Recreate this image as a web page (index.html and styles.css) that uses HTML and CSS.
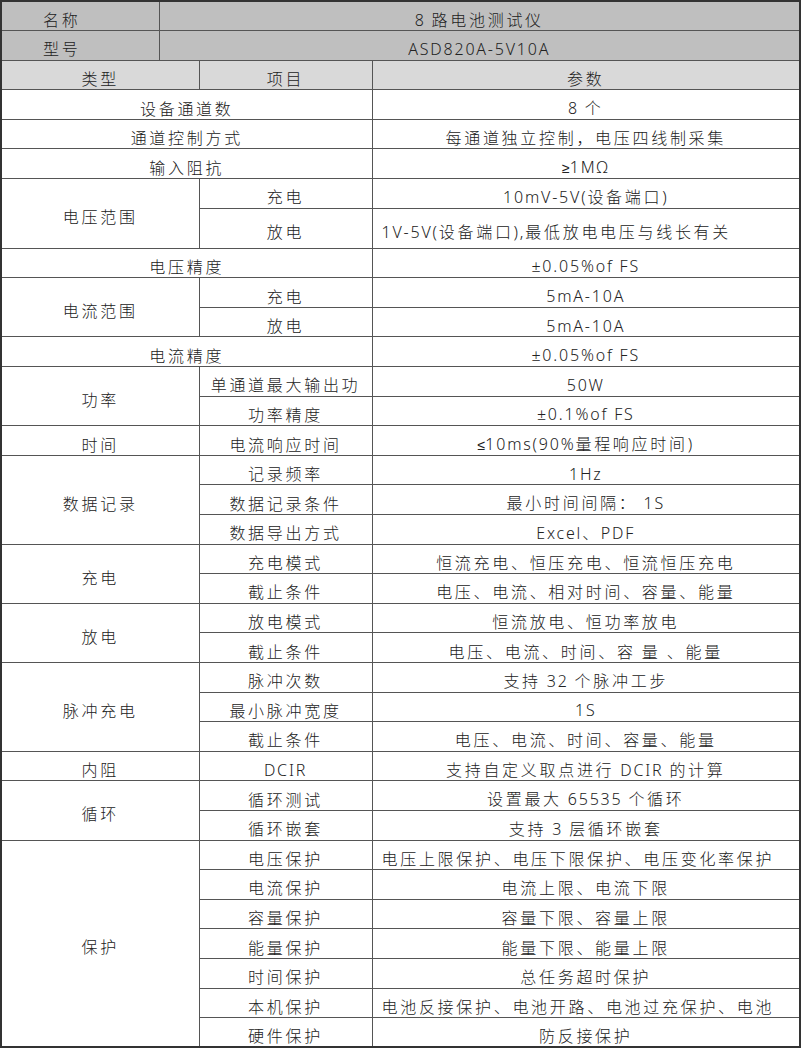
FILE: index.html
```html
<!DOCTYPE html>
<html lang="zh-CN">
<head>
<meta charset="utf-8">
<title>8 路电池测试仪</title>
<link rel="stylesheet" href="styles.css">
</head>
<body>
<table class="spec">
  <colgroup><col class="ca"><col class="cb"><col class="cc"><col class="cd"></colgroup>
  <tr class="name"><td class="label">名称</td><td colspan="3"><span class="lat">8 </span>路电池测试仪</td></tr>
  <tr class="name"><td class="label">型号</td><td colspan="3"><span class="lat">ASD820A-5V10A</span></td></tr>
  <tr class="head"><td colspan="2">类型</td><td>项目</td><td>参数</td></tr>
  <tr><td colspan="3">设备通道数</td><td><span class="lat">8 </span>个</td></tr>
  <tr><td colspan="3">通道控制方式</td><td>每通道独立控制，电压四线制采集</td></tr>
  <tr><td colspan="3">输入阻抗</td><td><span class="sym">≥</span><span class="lat">1MΩ</span></td></tr>
  <tr><td colspan="2" rowspan="2">电压范围</td><td>充电</td><td><span class="lat">10mV-5V(</span>设备端口<span class="lat">)</span></td></tr>
  <tr class="tall"><td>放电</td><td class="left"><span class="lat">1V-5V(</span>设备端口<span class="lat">),</span>最低放电电压与线长有关</td></tr>
  <tr><td colspan="3">电压精度</td><td><span class="lat">±0.05%of FS</span></td></tr>
  <tr><td colspan="2" rowspan="2">电流范围</td><td>充电</td><td><span class="lat">5mA-10A</span></td></tr>
  <tr><td>放电</td><td><span class="lat">5mA-10A</span></td></tr>
  <tr><td colspan="3">电流精度</td><td><span class="lat">±0.05%of FS</span></td></tr>
  <tr><td colspan="2" rowspan="2">功率</td><td>单通道最大输出功</td><td><span class="lat">50W</span></td></tr>
  <tr><td>功率精度</td><td><span class="lat">±0.1%of FS</span></td></tr>
  <tr><td colspan="2">时间</td><td>电流响应时间</td><td><span class="sym">≤</span><span class="lat">10ms(90%</span>量程响应时间<span class="lat">)</span></td></tr>
  <tr><td colspan="2" rowspan="3">数据记录</td><td>记录频率</td><td><span class="lat">1Hz</span></td></tr>
  <tr><td>数据记录条件</td><td>最小时间间隔：<span class="lat"> 1S</span></td></tr>
  <tr><td>数据导出方式</td><td><span class="lat">Excel</span>、<span class="lat">PDF</span></td></tr>
  <tr><td colspan="2" rowspan="2">充电</td><td>充电模式</td><td>恒流充电、恒压充电、恒流恒压充电</td></tr>
  <tr><td>截止条件</td><td>电压、电流、相对时间、容量、能量</td></tr>
  <tr><td colspan="2" rowspan="2">放电</td><td>放电模式</td><td>恒流放电、恒功率放电</td></tr>
  <tr><td>截止条件</td><td>电压、电流、时间、容 量 、能量</td></tr>
  <tr><td colspan="2" rowspan="3">脉冲充电</td><td>脉冲次数</td><td>支持<span class="lat"> 32 </span>个脉冲工步</td></tr>
  <tr><td>最小脉冲宽度</td><td><span class="lat">1S</span></td></tr>
  <tr><td>截止条件</td><td>电压、电流、时间、容量、能量</td></tr>
  <tr><td colspan="2">内阻</td><td><span class="lat">DCIR</span></td><td>支持自定义取点进行<span class="lat"> DCIR </span>的计算</td></tr>
  <tr><td colspan="2" rowspan="2">循环</td><td>循环测试</td><td>设置最大<span class="lat"> 65535 </span>个循环</td></tr>
  <tr><td>循环嵌套</td><td>支持<span class="lat"> 3 </span>层循环嵌套</td></tr>
  <tr><td colspan="2" rowspan="7">保护</td><td>电压保护</td><td class="left">电压上限保护、电压下限保护、电压变化率保护</td></tr>
  <tr><td>电流保护</td><td>电流上限、电流下限</td></tr>
  <tr><td>容量保护</td><td>容量下限、容量上限</td></tr>
  <tr><td>能量保护</td><td>能量下限、能量上限</td></tr>
  <tr><td>时间保护</td><td>总任务超时保护</td></tr>
  <tr><td>本机保护</td><td class="left">电池反接保护、电池开路、电池过充保护、电池</td></tr>
  <tr><td>硬件保护</td><td>防反接保护</td></tr>
</table>
</body>
</html>
```

FILE: styles.css
```css
html, body {
  margin: 0;
  padding: 0;
  background: #ffffff;
}

.spec {
  border-collapse: collapse;
  table-layout: fixed;
  width: 801px;
  border: 2px solid #333333;
  font-family: "Noto Sans CJK SC", "Noto Sans", sans-serif;
  font-weight: 300;
  font-size: 16px;
  letter-spacing: 2.7px;
  color: #222222;
}

.ca { width: 158px; }
.cb { width: 40px; }
.cc { width: 173px; }
.cd { width: 428px; }

.spec tr {
  height: 29.6px;
}

.spec tr.tall {
  height: 40px;
}

.spec td {
  border: 1px solid #555555;
  padding: 6px 0 0 0;
  line-height: 20px;
  text-align: center;
  vertical-align: middle;
  white-space: nowrap;
  overflow: hidden;
}

.spec td.left {
  text-align: left;
  padding-left: 9px;
}

.spec .lat {
  font-family: "Noto Sans", sans-serif;
  letter-spacing: 1.8px;
}

.spec .sym {
  font-family: "DejaVu Sans", sans-serif;
  letter-spacing: 0;
  font-size: 14px;
}

.spec tr.name td {
  background: #bfbfbf;
}

.spec tr.name td.label {
  text-align: left;
  padding-left: 41px;
}

.spec tr.head td {
  background: #d9d9d9;
}
```
